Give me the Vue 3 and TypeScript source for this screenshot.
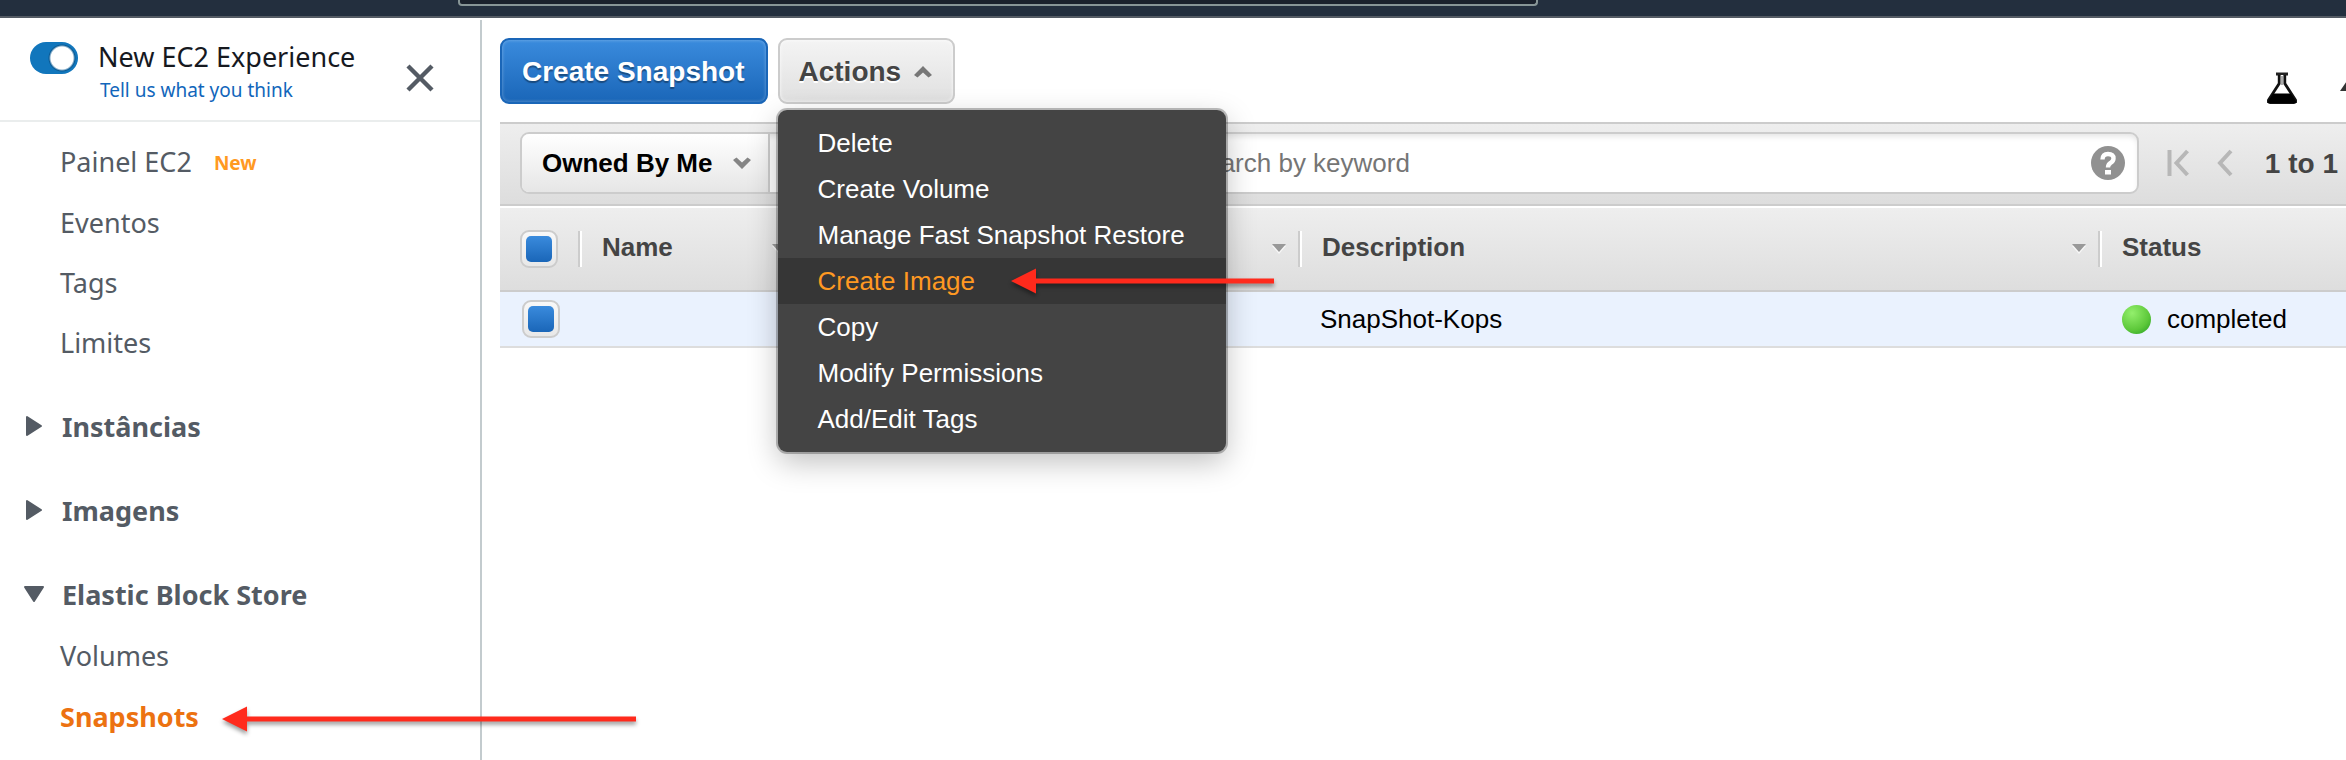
<script setup lang="ts">
import { ref } from 'vue'

interface NavLink {
  label: string
  isNew?: boolean
  active?: boolean
}

interface NavGroup {
  label: string
  open: boolean
  links: NavLink[]
}

interface Column {
  key: string
  label: string
  sortable: boolean
}

const newExperience = ref(true)
const owner = ref('Owned By Me')
const keyword = ref('')
const allSelected = ref(true)
const menuOpen = ref(true)

const topLinks: NavLink[] = [
  { label: 'Painel EC2', isNew: true },
  { label: 'Eventos' },
  { label: 'Tags' },
  { label: 'Limites' },
]

const groups = ref<NavGroup[]>([
  { label: 'Instâncias', open: false, links: [] },
  { label: 'Imagens', open: false, links: [] },
  {
    label: 'Elastic Block Store',
    open: true,
    links: [{ label: 'Volumes' }, { label: 'Snapshots', active: true }],
  },
])

const actions = [
  'Delete',
  'Create Volume',
  'Manage Fast Snapshot Restore',
  'Create Image',
  'Copy',
  'Modify Permissions',
  'Add/Edit Tags',
]
const highlighted = 'Create Image'

const columns: Column[] = [
  { key: 'name', label: 'Name', sortable: true },
  { key: 'id', label: 'Snapshot ID', sortable: true },
  { key: 'description', label: 'Description', sortable: true },
  { key: 'status', label: 'Status', sortable: false },
]

const rows = ref([{ description: 'SnapShot-Kops', status: 'completed', selected: true }])
</script>

<template>
  <div class="page">
    <header class="topbar">
      <div class="topbar-search"></div>
    </header>

    <div class="body">
      <aside class="sidebar">
        <div class="experience">
          <input id="experience" v-model="newExperience" class="switch" type="checkbox" />
          <div class="experience-text">
            <label for="experience">New EC2 Experience</label>
            <a href="#">Tell us what you think</a>
          </div>
          <button class="close" type="button" aria-label="Close">
            <svg viewBox="0 0 28 28" width="28" height="28">
              <path d="M2 2 26 26M26 2 2 26" fill="none" stroke="#545b64" stroke-width="4.4" />
            </svg>
          </button>
        </div>

        <nav class="nav">
          <ul>
            <li v-for="link in topLinks" :key="link.label">
              <a href="#">{{ link.label }}</a>
              <span v-if="link.isNew" class="new">New</span>
            </li>
          </ul>
          <section v-for="group in groups" :key="group.label" class="group">
            <button type="button" :aria-expanded="group.open" @click="group.open = !group.open">
              <svg viewBox="0 0 24 24" width="24" height="24">
                <path
                  :d="group.open ? 'M3 5H21L12 19Z' : 'M5 3V21L19 12Z'"
                  fill="#545b64"
                  stroke="#545b64"
                  stroke-width="2"
                  stroke-linejoin="round"
                />
              </svg>
              {{ group.label }}
            </button>
            <ul v-if="group.open && group.links.length">
              <li v-for="link in group.links" :key="link.label">
                <a href="#" :class="{ active: link.active }">{{ link.label }}</a>
                <svg v-if="link.active" class="pointer long" viewBox="0 0 414 30" width="414" height="30">
                  <path d="M0 15 25 2.500V12.500H414V17.500H25V27.500Z" fill="#ff2a1c" />
                </svg>
              </li>
            </ul>
          </section>
        </nav>
      </aside>

      <main class="main">
        <div class="toolbar">
          <button class="btn primary" type="button">Create Snapshot</button>
          <div class="menu-anchor">
            <button class="btn" type="button" :aria-expanded="menuOpen" @click="menuOpen = !menuOpen">
              Actions
              <svg viewBox="0 0 20 14" width="20" height="14">
                <path d="M1 10 10 1 19 10 15.500 12.500 10 7.500 4.500 12.500Z" fill="#777" />
              </svg>
            </button>
            <ul v-if="menuOpen" class="menu">
              <li v-for="action in actions" :key="action">
                <button type="button" :class="{ hot: action === highlighted }">{{ action }}</button>
                <svg
                  v-if="action === highlighted"
                  class="pointer short"
                  viewBox="0 0 263 30"
                  width="263"
                  height="30"
                >
                  <path d="M0 15 25 2.500V12.500H263V17.500H25V27.500Z" fill="#ff2a1c" />
                </svg>
              </li>
            </ul>
          </div>
          <div class="tools">
            <button type="button" aria-label="Experiments">
              <svg viewBox="0 0 32 32" width="32" height="32">
                <path d="M10 0.500H22V3.500H10Z" fill="#222" />
                <path
                  d="M13.200 3V11.500L2.500 28Q2 30.500 4 30.500H28Q30 30.500 29.500 28L18.800 11.500V3"
                  fill="#fff"
                  stroke="#111"
                  stroke-width="2.800"
                />
                <path d="M14.800 4H17.200V13H14.800Z" fill="#aaa" />
                <path d="M7 21.500H25L31 31H1Z" fill="#000" />
              </svg>
            </button>
            <button type="button" aria-label="Refresh">
              <svg viewBox="0 0 32 32" width="32" height="32">
                <path d="M0 19 9 6 18 19Z" fill="#333" />
              </svg>
            </button>
          </div>
        </div>

        <div class="filter">
          <div class="filter-box">
            <div class="owner">
              <select v-model="owner" aria-label="Owner">
                <option>Owned By Me</option>
              </select>
              <svg viewBox="0 0 20 14" width="20" height="14">
                <path d="M1 4 10 13 19 4 15.500 1.500 10 6.500 4.500 1.500Z" fill="#858585" />
              </svg>
            </div>
            <input
              v-model="keyword"
              type="text"
              aria-label="Filter"
              placeholder="Filter by tags and attributes or search by keyword"
            />
            <button class="help" type="button" aria-label="Help">
              <svg viewBox="0 0 34 34" width="34" height="34">
                <circle cx="17" cy="17" r="17" fill="#919191" />
                <path
                  d="M11.500 13.500Q11.500 8 17 8Q22.500 8 22.500 12.500Q22.500 15 19.500 17Q17 18.500 17 21.500"
                  fill="none"
                  stroke="#fff"
                  stroke-width="4.400"
                />
                <path d="M14 24H20V28.500H14Z" fill="#fff" />
              </svg>
            </button>
          </div>
          <div class="pager">
            <button type="button" aria-label="First page">
              <svg viewBox="0 0 22 28" width="22" height="28">
                <path d="M2.500 1V27M20.500 2 9.500 14 20.500 26" fill="none" stroke="#b7b7b7" stroke-width="4" />
              </svg>
            </button>
            <button type="button" aria-label="Previous page">
              <svg viewBox="0 0 16 28" width="16" height="28">
                <path d="M14 2 3 14 14 26" fill="none" stroke="#b7b7b7" stroke-width="4" />
              </svg>
            </button>
            <span>1 to 1</span>
          </div>
        </div>

        <table class="grid">
          <colgroup>
            <col class="c-check" />
            <col class="c-name" />
            <col class="c-id" />
            <col />
            <col class="c-status" />
          </colgroup>
          <thead>
            <tr>
              <th class="pick"><input v-model="allSelected" type="checkbox" aria-label="Select all" /></th>
              <th v-for="col in columns" :key="col.key" scope="col">
                <div class="head">
                  <span>{{ col.label }}</span>
                  <svg v-if="col.sortable" viewBox="0 0 14 10" width="14" height="10">
                    <path d="M0 2 7 10 14 2Z" fill="#f8f8f8" />
                    <path d="M0 0H14L7 8Z" fill="#999" />
                  </svg>
                </div>
              </th>
            </tr>
          </thead>
          <tbody>
            <tr v-for="row in rows" :key="row.description">
              <td class="pick"><input v-model="row.selected" type="checkbox" aria-label="Select snapshot" /></td>
              <td></td>
              <td></td>
              <td>{{ row.description }}</td>
              <td>
                <div class="status"><span class="dot"></span>{{ row.status }}</div>
              </td>
            </tr>
          </tbody>
        </table>
      </main>
    </div>
  </div>
</template>

<style>
html,
body {
  margin: 0;
  overflow: hidden;
}
</style>

<style scoped>
.page {
  display: flex;
  flex-direction: column;
  min-height: 100vh;
  background: #fff;
  font-family: 'Liberation Sans', Arial, Helvetica, sans-serif;
  font-size: 26px;
  color: #000;
}

.page * {
  box-sizing: border-box;
}

button {
  margin: 0;
  padding: 0;
  border: 0;
  background: none;
  font: inherit;
  color: inherit;
  cursor: pointer;
}

svg {
  display: block;
  flex: none;
}

ul {
  margin: 0;
  padding: 0;
  list-style: none;
}

.topbar {
  height: 18px;
  padding: 0 808px 0 458px;
  border-bottom: 2px solid #545b64;
  background: #232f3e;
}

.topbar-search {
  height: 6px;
  border: 2px solid #879596;
  border-top: 0;
  border-radius: 0 0 4px 4px;
  background: #1a212c;
}

.body {
  display: flex;
  flex: 1;
}

.sidebar {
  position: relative;
  z-index: 2;
  flex: none;
  width: 482px;
  margin-top: 2px;
  border-right: 2px solid #c3cbce;
  font-family: 'Noto Sans', 'Open Sans', sans-serif;
  font-size: 27px;
  color: #545b64;
}

.experience {
  display: flex;
  align-items: flex-start;
  height: 102px;
  padding: 18px 46px 0 30px;
  border-bottom: 2px solid #eaeded;
}

.switch {
  flex: none;
  appearance: none;
  width: 48px;
  height: 32px;
  margin: 4px 20px 0 0;
  border-radius: 16px;
  background: radial-gradient(circle at 32px 16px, #fff 11px, #0a5a94 13px, #1176bc 14px);
}

.experience-text {
  display: flex;
  flex: 1;
  flex-direction: column;
  white-space: nowrap;
}

.experience-text label {
  line-height: 38px;
  color: #16191f;
}

.experience-text a {
  padding-left: 2px;
  font-size: 19px;
  line-height: 28px;
  color: #1166bb;
  text-decoration: none;
}

.close {
  margin-top: 26px;
}

.nav {
  padding-top: 8px;
}

.nav li {
  position: relative;
  display: flex;
  align-items: center;
  height: 60px;
  padding-left: 60px;
}

.nav li:first-child {
  height: 62px;
}

.nav a {
  color: #545b64;
  text-decoration: none;
}

.nav a.active {
  font-weight: 700;
  color: #ec7211;
}

.new {
  padding: 4px 0 0 22px;
  font-size: 19px;
  font-weight: 700;
  color: #ff9922;
}

.group {
  padding-top: 24px;
}

.group button {
  display: flex;
  gap: 16px;
  align-items: center;
  height: 60px;
  padding-left: 22px;
  font-weight: 700;
}

.pointer {
  position: absolute;
  z-index: 3;
  overflow: visible;
  filter: drop-shadow(0 3px 2px rgba(0, 0, 0, 0.4));
  pointer-events: none;
}

.pointer.long {
  left: 222px;
  top: 18px;
}

.pointer.short {
  left: 233px;
  top: 8px;
}

.main {
  flex: 1;
  min-width: 0;
  padding: 20px 0 0 18px;
}

.toolbar {
  display: flex;
  gap: 10px;
  height: 84px;
}

.btn {
  display: flex;
  gap: 12px;
  align-items: center;
  height: 66px;
  padding: 2px 20px 0 19px;
  border: 2px solid #ccc;
  border-radius: 9px;
  background: linear-gradient(#f4f4f4, #e0e0e0);
  box-shadow: inset 0 0 3px 1px rgba(255, 255, 255, 0.5);
  font-size: 28px;
  font-weight: 700;
  color: #444;
  text-shadow: 0 2px 0 #fff;
  white-space: nowrap;
}

.btn.primary {
  padding: 2px 21px 0 20px;
  border-color: #1a66b8;
  background: linear-gradient(#3a8bdd, #1a66b8);
  box-shadow: inset 0 0 3px 1px rgba(255, 255, 255, 0.2);
  color: #fff;
  text-shadow: 0 2px 1px rgba(0, 0, 0, 0.35);
}

.menu-anchor {
  position: relative;
}

.menu {
  position: absolute;
  z-index: 1;
  top: 72px;
  left: 0;
  width: 448px;
  padding: 10px 0;
  border-radius: 9px;
  background: #444;
  box-shadow: 0 0 0 2px rgba(0, 0, 0, 0.25), 0 10px 30px rgba(0, 0, 0, 0.25);
  color: #fff;
}

.menu li {
  position: relative;
}

.menu button {
  width: 100%;
  height: 46px;
  padding: 0 40px;
  text-align: left;
  white-space: nowrap;
}

.menu button.hot {
  background: #363636;
  color: #ff9922;
}

.tools {
  display: flex;
  gap: 42px;
  align-items: center;
  margin-left: auto;
  margin-right: -26px;
  padding-top: 16px;
}

.filter {
  display: flex;
  align-items: center;
  height: 84px;
  padding: 0 8px 2px 20px;
  border: solid #ccc;
  border-width: 2px 0;
  background: linear-gradient(#eee, #ddd);
}

.filter-box {
  display: flex;
  flex: 1;
  height: 62px;
  overflow: hidden;
  border: 2px solid #ccc;
  border-radius: 9px;
  background: #fff;
  box-shadow: inset 0 4px 6px -2px rgba(0, 0, 0, 0.12);
}

.owner {
  display: flex;
  align-items: center;
  padding: 0 16px 0 20px;
  border-right: 2px solid #ccc;
  background: linear-gradient(#fff, #e6e6e6);
}

.owner select {
  appearance: none;
  width: 190px;
  padding: 0;
  border: 0;
  background: none;
  font: inherit;
  font-weight: 700;
  color: #000;
}

.filter-box input {
  flex: 1;
  min-width: 0;
  padding: 0 12px 0 72px;
  border: 0;
  outline: 0;
  background: none;
  font: inherit;
}

.filter-box input::placeholder {
  color: #757575;
  opacity: 1;
}

.help {
  padding: 0 12px 0 0;
}

.pager {
  display: flex;
  gap: 28px;
  align-items: center;
  padding-left: 28px;
  font-size: 28px;
  font-weight: 700;
  color: #444;
  white-space: nowrap;
}

.pager span {
  padding: 2px 0 0 4px;
}

.grid {
  width: 100%;
  table-layout: fixed;
  border-spacing: 0;
  border-top: 2px solid #fff;
}

.c-check {
  width: 78px;
}

.c-name {
  width: 220px;
}

.c-id {
  width: 500px;
}

.c-status {
  width: 248px;
}

.grid thead {
  background: linear-gradient(#eee, #ddd);
}

.grid th {
  height: 84px;
  padding: 0;
  border-bottom: 2px solid #ccc;
  text-align: left;
  color: #444;
}

.head {
  display: flex;
  align-items: center;
  justify-content: space-between;
  height: 36px;
  padding: 0 12px 0 22px;
  border-left: 2px solid #ccc;
  box-shadow: inset 2px 0 #fff;
  white-space: nowrap;
}

.head span {
  padding-bottom: 4px;
}

.grid td {
  height: 56px;
  padding: 0 0 0 22px;
  border-bottom: 2px solid #ddd;
  background: #eaf2fe;
}

.grid th.pick {
  padding-left: 20px;
}

.pick input {
  display: block;
  appearance: none;
  width: 38px;
  height: 38px;
  margin: 0;
  padding: 4px;
  border: 2px solid #ccc;
  border-radius: 9px;
  background: linear-gradient(#f8f8f8, #e8e8e8);
}

.pick input:checked::before {
  display: block;
  width: 26px;
  height: 26px;
  border-radius: 5px;
  background: linear-gradient(#3a8bdd, #1a66b8);
  content: '';
}

.status {
  display: flex;
  gap: 16px;
  align-items: center;
}

.dot {
  width: 29px;
  height: 29px;
  margin-left: 2px;
  border-radius: 50%;
  background: radial-gradient(circle at 35% 28%, #93ef6c, #5dc83a 60%, #1f9a1f);
}
</style>
